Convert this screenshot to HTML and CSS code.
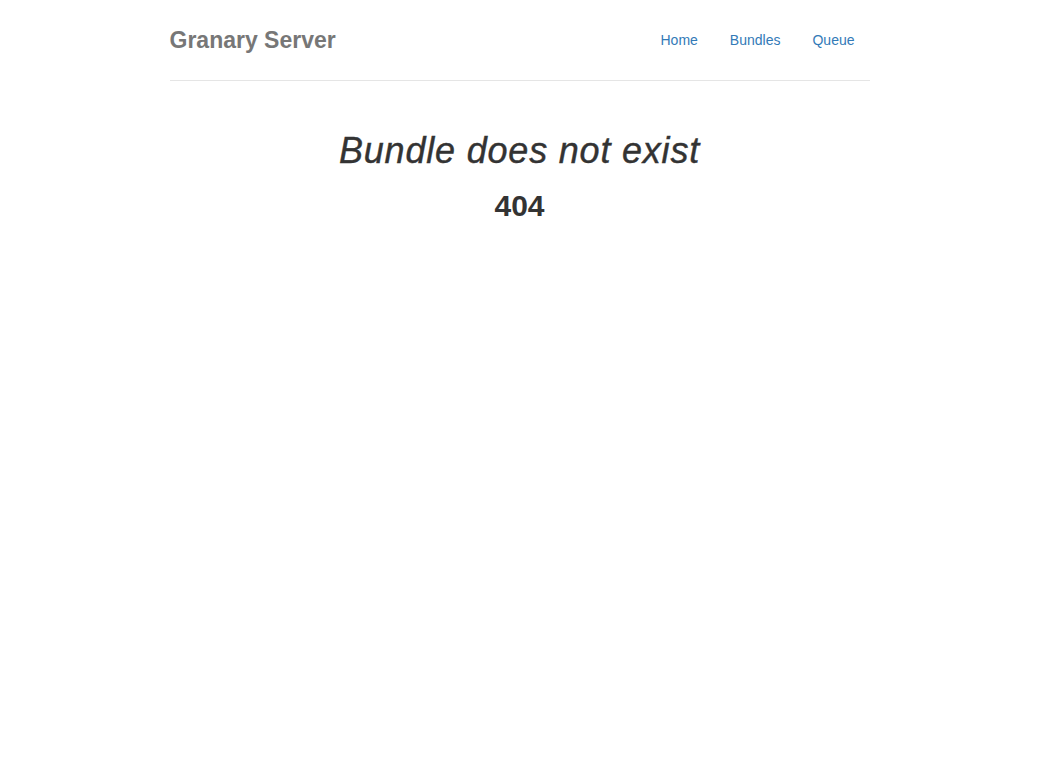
FILE: index.html
```html
<!DOCTYPE html>
<html lang="en">
<head>
<meta charset="utf-8">
<title>Granary Server</title>
<link rel="stylesheet" href="styles.css">
</head>
<body>
<div class="container">
  <div class="header">
    <h3 class="brand">Granary Server</h3>
    <ul class="nav">
      <li><a href="#">Home</a></li>
      <li><a href="#">Bundles</a></li>
      <li><a href="#">Queue</a></li>
    </ul>
  </div>
  <div class="content">
    <h1 class="title">Bundle does not exist</h1>
    <h2 class="code">404</h2>
  </div>
</div>
</body>
</html>
```
FILE: styles.css
```css
html, body {
  margin: 0;
  padding: 0;
  background: #fff;
}
body {
  font-family: "Liberation Sans", Arial, Helvetica, sans-serif;
  font-size: 14px;
  line-height: 1.42857;
  color: #333;
  padding-top: 20px;
  padding-bottom: 20px;
}
.container {
  max-width: 700px;
  margin: 0 auto;
  padding: 0 15px;
}
.header {
  display: flex;
  justify-content: space-between;
  align-items: flex-start;
  padding-bottom: 20px;
  border-bottom: 1px solid #e5e5e5;
}
.brand {
  margin: 0;
  font-size: 23px;
  line-height: 40px;
  font-weight: bold;
  color: #777;
}
.nav {
  display: flex;
  list-style: none;
  margin: 0;
  padding: 0;
}
.nav li + li {
  margin-left: 2px;
}
.nav a {
  display: block;
  padding: 10px 15px;
  line-height: 20px;
  color: #337ab7;
  text-decoration: none;
}
.content {
  text-align: center;
  padding-top: 50px;
}
.title {
  margin: 0;
  font-size: 36px;
  line-height: 1.1;
  font-style: italic;
  font-weight: normal;
  letter-spacing: 0.8px;
  -webkit-text-stroke: 0.4px #333;
  color: #333;
}
.code {
  margin: 18px 0 0;
  font-size: 30px;
  line-height: 1.1;
  font-weight: bold;
  color: #333;
}
```
